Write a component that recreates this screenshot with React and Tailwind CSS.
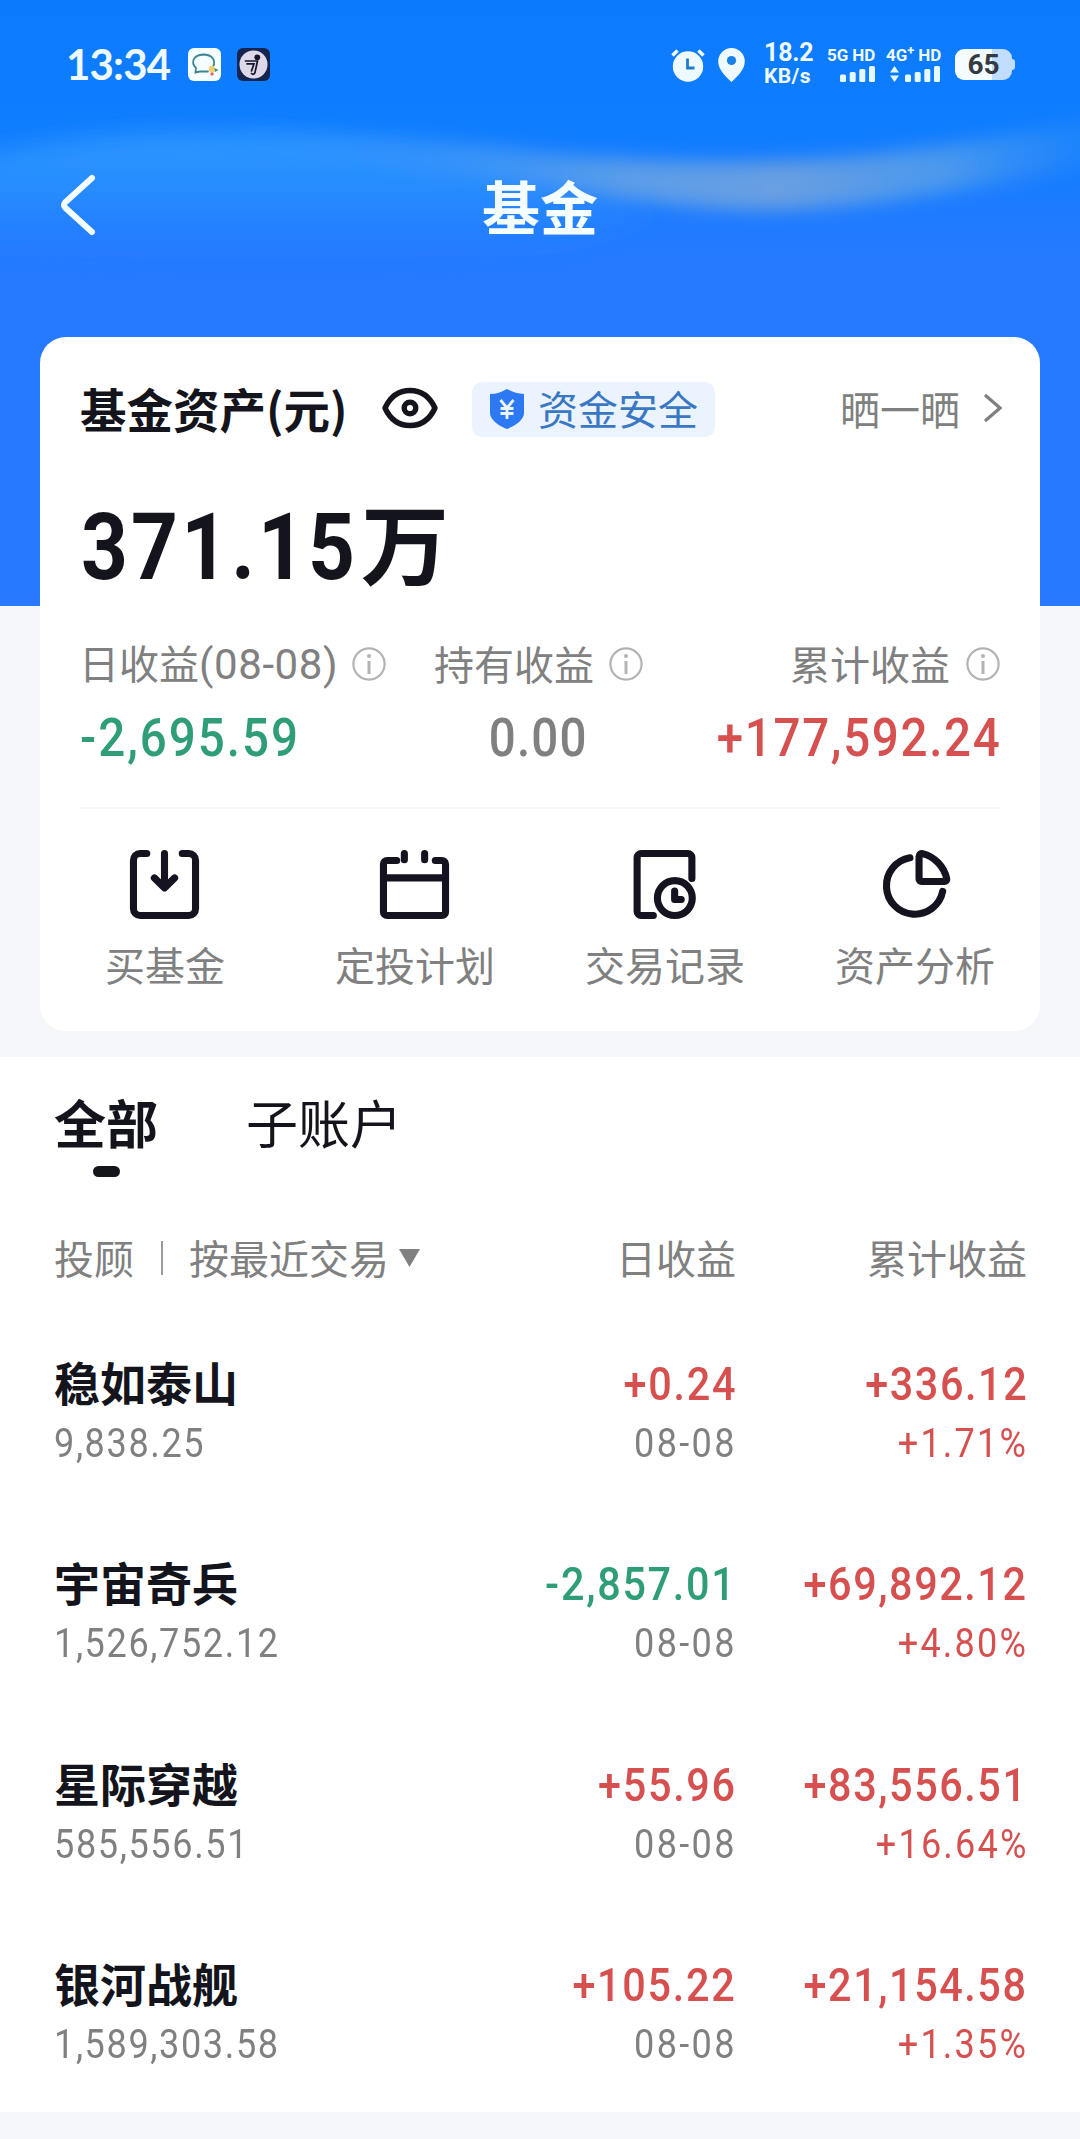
import React from 'react';

const quickActions = [
  { label: '买基金', Icon: BuyIcon },
  { label: '定投计划', Icon: PlanIcon },
  { label: '交易记录', Icon: RecordIcon },
  { label: '资产分析', Icon: AnalysisIcon },
];

const funds = [
  { name: '稳如泰山', amount: '9,838.25', daily: '+0.24', date: '08-08', total: '+336.12', rate: '+1.71%' },
  { name: '宇宙奇兵', amount: '1,526,752.12', daily: '-2,857.01', date: '08-08', total: '+69,892.12', rate: '+4.80%' },
  { name: '星际穿越', amount: '585,556.51', daily: '+55.96', date: '08-08', total: '+83,556.51', rate: '+16.64%' },
  { name: '银河战舰', amount: '1,589,303.58', daily: '+105.22', date: '08-08', total: '+21,154.58', rate: '+1.35%' },
];

function BuyIcon() {
  return (
    <svg className="mr-px h-[71px] w-[71px]" viewBox="0 0 70 70" fill="none" stroke="#14131f" strokeWidth="7" strokeLinecap="round" strokeLinejoin="round">
      <path d="M17.5 4.4H11A6.6 6.6 0 0 0 4.4 11V59A6.6 6.6 0 0 0 11 65.6H59A6.6 6.6 0 0 0 65.6 59V11A6.6 6.6 0 0 0 59 4.4H52.5" />
      <path d="M35 4.4V38M25 28.5L35 38.3L45 28.5" />
    </svg>
  );
}

function PlanIcon() {
  return (
    <svg className="mr-px h-[71px] w-[71px]" viewBox="0 0 70 70" fill="none" stroke="#14131f" strokeWidth="7" strokeLinecap="round" strokeLinejoin="round">
      <path d="M17.500 11.4H8A3.6 3.6 0 0 0 4.4 15V62A3.6 3.6 0 0 0 8 65.6H62A3.6 3.6 0 0 0 65.6 62V15A3.6 3.6 0 0 0 62 11.4H55.500" />
      <path d="M4.4 28.500H65.6M25 4.4V10.500M45 4.4V10.500" />
    </svg>
  );
}

function RecordIcon() {
  return (
    <svg className="mr-px h-[71px] w-[71px]" viewBox="0 0 70 70" fill="none" stroke="#14131f" strokeWidth="7" strokeLinecap="round" strokeLinejoin="round">
      <path d="M24 65.6H12A4 4 0 0 1 8 61.6V8.4A4 4 0 0 1 12 4.4H58A4 4 0 0 1 62 8.4V29" />
      <circle cx="45.2" cy="48.4" r="17.2" />
      <path d="M45 41.5V49.8H51.5" />
    </svg>
  );
}

function AnalysisIcon() {
  return (
    <svg className="h-[71px] w-[71px]" viewBox="0 0 70 70" fill="none" stroke="#14131f" strokeWidth="7" strokeLinecap="round" strokeLinejoin="round">
      <path d="M29.5 8.7A28 28 0 1 0 61.8 41.8" />
      <path d="M38.5 7.2V29.5A2.6 2.6 0 0 0 41 32.1H63.5A2.4 2.4 0 0 0 65.8 29.3A33 33 0 0 0 42 4.6A2.8 2.8 0 0 0 38.5 7.2Z" />
    </svg>
  );
}

function InfoIcon() {
  return (
    <svg className="h-[34px] w-[34px] shrink-0" viewBox="0 0 34 34" fill="none">
      <circle cx="17" cy="17" r="15.6" stroke="#b3b3b3" strokeWidth="2.2" />
      <circle cx="17" cy="8.9" r="2" fill="#b3b3b3" />
      <path d="M17 14V27" stroke="#b3b3b3" strokeWidth="3" />
    </svg>
  );
}

function SignalBars() {
  return (
    <svg className="h-4 w-[35px]" viewBox="0 0 35 16" fill="#e6f8ff">
      <rect x="0" y="8.5" width="6" height="7.5" rx="1.5" />
      <rect x="9.7" y="6" width="6" height="10" rx="1.5" />
      <rect x="19.3" y="3" width="6" height="13" rx="1.5" />
      <rect x="29" y="0" width="6" height="16" rx="1.5" />
    </svg>
  );
}

function HeaderGlow() {
  return (
    <svg className="absolute inset-0 h-full w-full" viewBox="0 0 1080 606" preserveAspectRatio="none">
      <defs>
        <linearGradient id="base" x1="0" y1="0" x2="0" y2="1">
          <stop offset="0" stopColor="#0b7bfd" />
          <stop offset="0.22" stopColor="#0f7dff" />
          <stop offset="0.42" stopColor="#257aff" />
          <stop offset="1" stopColor="#2879ff" />
        </linearGradient>
        <linearGradient id="swoosh" gradientUnits="userSpaceOnUse" x1="200" y1="0" x2="1080" y2="0">
          <stop offset="0" stopColor="#3f9cfb" stopOpacity="0" />
          <stop offset="0.3" stopColor="#4a9ef5" stopOpacity="0.6" />
          <stop offset="0.48" stopColor="#66a3e6" stopOpacity="0.85" />
          <stop offset="0.66" stopColor="#72a2de" stopOpacity="0.9" />
          <stop offset="0.85" stopColor="#569fea" stopOpacity="0.8" />
          <stop offset="1" stopColor="#2f8ff8" stopOpacity="0.4" />
        </linearGradient>
        <linearGradient id="haze" x1="0" y1="0" x2="0" y2="1">
          <stop offset="0" stopColor="#2f99ff" />
          <stop offset="0.5" stopColor="#2b90ff" stopOpacity="0.7" />
          <stop offset="1" stopColor="#267cff" stopOpacity="0" />
        </linearGradient>
        <filter id="soft" x="-20%" y="-40%" width="140%" height="180%">
          <feGaussianBlur stdDeviation="9" />
        </filter>
        <filter id="softer" x="-30%" y="-50%" width="160%" height="200%">
          <feGaussianBlur stdDeviation="12" />
        </filter>
      </defs>
      <rect width="1080" height="606" fill="url(#base)" />
      <path d="M-40 160C60 138 150 130 260 134C400 142 520 180 660 215L560 250C400 270 180 270 -40 250Z" fill="url(#haze)" filter="url(#softer)" />
      <path d="M180 132C330 128 440 138 540 152C660 164 760 165 860 156C950 146 1020 136 1120 112V158C980 188 860 212 745 210C620 204 460 172 180 132Z" fill="url(#swoosh)" filter="url(#soft)" />
    </svg>
  );
}

function StatusBar() {
  return (
    <div className="flex h-[129px] items-center justify-between pl-[66px] pr-[65px] text-[#eefaff]">
      <div className="flex items-center">
        <span className="w-[122px] pb-[2px] font-[Lato] text-[42px] font-bold leading-none tracking-[-0.8px]">13:34</span>
        <svg className="h-[33px] w-[33px]" viewBox="0 0 33 33">
          <rect width="33" height="33" rx="6" fill="#f5fdff" />
          <path d="M8 20C2 14 6 7 15 6.5C25 6.500 28 13 25 18.500M8 20L7.500 24.500L12 23.500H20" fill="none" stroke="#3d8590" strokeWidth="1.8" strokeLinecap="round" />
          <circle cx="24" cy="21" r="3.200" fill="#f2cf78" />
          <path d="M26.500 20L30.500 22L27 24Z" fill="#48906b" />
          <circle cx="24" cy="26" r="1.800" fill="#e2705c" />
        </svg>
        <svg className="ml-4 h-[33px] w-[33px]" viewBox="0 0 33 33">
          <rect width="33" height="33" rx="6" fill="#152550" />
          <circle cx="16.500" cy="16.500" r="14" fill="#ddd9e8" />
          <circle cx="20.300" cy="9.300" r="2.900" fill="#15162a" />
          <path d="M8.500 13H20.500L18 24.500Q16.500 27.500 14.500 25.500M10 15.800H17L14.500 23" fill="none" stroke="#15162a" strokeWidth="1.700" strokeLinecap="round" />
        </svg>
      </div>

      <div className="flex items-center font-[Roboto] font-bold leading-none">
        <svg className="h-[34px] w-[34px]" viewBox="0 0 34 34">
          <circle cx="17" cy="18.500" r="15.200" fill="#eefaff" />
          <path d="M1.500 7.500L6.500 2.500M32.500 7.500L27.500 2.500" stroke="#eefaff" strokeWidth="3.500" />
          <path d="M16.500 10.500V20H23.500" fill="none" stroke="#1f7ccc" strokeWidth="2.800" />
        </svg>
        <svg className="ml-[13px] h-[34px] w-[27px]" viewBox="0 0 27 34">
          <path d="M13.500 0A13.300 13.300 0 0 1 26.800 13.300C26.800 22 19 29 13.500 34C8 29 .2 22 .2 13.300A13.300 13.300 0 0 1 13.500 0Z" fill="#eefaff" />
          <circle cx="13.500" cy="12.500" r="4.600" fill="#1a80e8" />
        </svg>
        <p className="ml-[19px] w-[63px] text-[25px] leading-[22px] tracking-[-0.2px]">
          18.2
          <br />
          <small className="text-[21px] tracking-[0.4px]">KB/s</small>
        </p>
        <div className="flex w-[59px] flex-col">
          <span className="h-[19px] whitespace-nowrap text-[17px] leading-[16px] tracking-[-0.1px]">5G HD</span>
          <div className="pl-[13px]">
            <SignalBars />
          </div>
        </div>
        <div className="flex w-[69px] flex-col">
          <span className="h-[19px] whitespace-nowrap text-[17px] leading-[16px] tracking-[-0.1px]">
            4G<sup className="text-[13px]">+</sup> HD
          </span>
          <div className="flex gap-[6px] pl-1">
            <svg className="h-4 w-[9px]" viewBox="0 0 9 16" fill="#e6f8ff">
              <path d="M4.500 0L9 6.500H0ZM4.500 16L0 9.500H9Z" />
            </svg>
            <SignalBars />
          </div>
        </div>
        <div className="flex items-center">
          <div className="flex h-[31px] w-[57px] items-center justify-center rounded-[9px] bg-linear-to-r from-[#f4fcff] from-65% to-[#c2ddff] to-65% text-[28px] text-[#333a40]">
            65
          </div>
          <div className="h-[11px] w-[3px] rounded-r-full bg-[#c2ddff]" />
        </div>
      </div>
    </div>
  );
}

// Figures are set in a narrowed face with open tracking.
function Figure({ value, align = 'right', className = '' }) {
  const origin = align === 'left' ? 'origin-left' : align === 'center' ? 'origin-center' : 'origin-right -mr-px';
  return (
    <span className={`inline-block scale-x-[0.88] whitespace-nowrap font-[Roboto] leading-none ${origin} ${className}`}>
      {value}
    </span>
  );
}

function Profit({ value, align, className = '' }) {
  const color = value.startsWith('-') ? 'text-[#2f9e78]' : 'text-[#d5504f]';
  return <Figure value={value} align={align} className={`${color} ${className}`} />;
}

function AssetCard() {
  return (
    <section className="relative mx-10 -mt-[269px] h-[694px] rounded-[26px] bg-white">
      <div className="flex h-[144px] items-center pl-10 pr-[38px] text-[40px]">
        <h2 className="w-[302px] whitespace-nowrap pb-[1px] text-[46.500px] font-bold leading-none text-[#14141c]">基金资产(元)</h2>
        <svg className="-mt-[2px] h-[42px] w-[56px]" viewBox="0 0 56 42" fill="none" stroke="#14141c" strokeWidth="5.400">
          <path d="M3 21C9 8 18 3.500 28 3.500S47 8 53 21C47 34 38 38.500 28 38.500S9 34 3 21Z" strokeLinejoin="round" />
          <circle cx="28" cy="21" r="5.800" />
        </svg>
        <div className="ml-[34px] flex h-[55px] w-[243px] items-center rounded-[10px] bg-[#eaf3fe] pl-[18px]">
          <svg className="h-[40px] w-[34px] shrink-0" viewBox="0 0 34 40">
            <path d="M17 0C22 3 28 5 34 5V24C34 31 25 37 17 40C9 37 0 31 0 24V5C6 5 12 3 17 0Z" fill="#2d79f3" />
            <path d="M10.500 11L17 19L23.500 11M17 19V30M10.500 19.500H23.500M10.500 24.500H23.500" fill="none" stroke="#eaf3fe" strokeWidth="2.800" />
          </svg>
          <span className="ml-[14px] whitespace-nowrap pb-[3px] leading-none text-[#3878c4]">资金安全</span>
        </div>
        <span className="ml-auto whitespace-nowrap pb-[2px] leading-none text-[#808080]">晒一晒</span>
        <svg className="-mt-[2px] ml-[23px] h-[30px] w-[19px]" viewBox="0 0 19 30" fill="none" stroke="#808080" strokeWidth="3.200">
          <path d="M2 2L17 15L2 28" />
        </svg>
      </div>

      <div className="flex h-[133px] items-center pl-[41px] text-[#14141c]">
        <span className="w-[280px]">
          <Figure value="371.15" align="left" className="text-[93px] font-bold tracking-[0.038em]" />
        </span>
        <span className="pb-[16px] text-[88px] font-bold leading-none">万</span>
      </div>

      <div className="mx-10 flex h-[195px] justify-between border-b-2 border-[#f7f7f7] pt-[25px] text-[40px] text-[#808080]">
        <div className="w-[306px]">
          <div className="flex h-[50px] items-center justify-between">
            <span className="-ml-px whitespace-nowrap leading-none">
              日收益<span className="font-[Roboto] text-[42px] tracking-[0.6px]">(08-08)</span>
            </span>
            <InfoIcon />
          </div>
          <div className="mt-[19px] flex h-[60px] items-center">
            <Profit value="-2,695.59" align="left" className="text-[54px] font-medium tracking-[0.042em]" />
          </div>
        </div>
        <div className="ml-[48px] w-[209px]">
          <div className="flex h-[50px] items-center justify-between">
            <span className="whitespace-nowrap pb-[3px] leading-none">持有收益</span>
            <InfoIcon />
          </div>
          <div className="mt-[19px] flex h-[60px] items-center justify-center">
            <Figure value="0.00" align="center" className="text-[54px] font-medium tracking-[0.025em]" />
          </div>
        </div>
        <div className="flex flex-1 flex-col items-end">
          <div className="flex h-[50px] items-center gap-4">
            <span className="whitespace-nowrap pb-[3px] leading-none">累计收益</span>
            <InfoIcon />
          </div>
          <div className="mt-[19px] flex h-[60px] items-center">
            <Profit value="+177,592.24" className="text-[54px] font-medium tracking-[0.035em]" />
          </div>
        </div>
      </div>

      <div className="grid grid-cols-4 pt-[40px]">
        {quickActions.map(({ label, Icon }) => (
          <button key={label} type="button" className="flex flex-col items-center">
            <Icon />
            <span className="mt-[24px] text-[40px] leading-none text-[#808080]">{label}</span>
          </button>
        ))}
      </div>
    </section>
  );
}

function FundRow({ fund }) {
  return (
    <div className="flex h-[200.600px] items-start">
      <div className="flex-1">
        <div className="flex h-[60px] items-center pb-[5px] text-[46px] font-bold leading-none text-[#14141c]">{fund.name}</div>
        <div className="flex h-[60px] items-center">
          <Figure value={fund.amount} align="left" className="text-[41px] tracking-[0.045em] text-[#808080]" />
        </div>
      </div>
      <div className="flex w-[240px] flex-col items-end">
        <div className="flex h-[60px] items-center">
          <Profit value={fund.daily} className="text-[47px] font-medium tracking-[0.042em]" />
        </div>
        <div className="flex h-[60px] items-center">
          <Figure value={fund.date} className="text-[41px] tracking-[0.065em] text-[#808080]" />
        </div>
      </div>
      <div className="flex w-[291px] flex-col items-end">
        <div className="flex h-[60px] items-center">
          <Profit value={fund.total} className="text-[47px] font-medium tracking-[0.038em]" />
        </div>
        <div className="flex h-[60px] items-center">
          <Profit value={fund.rate} className="text-[41px] tracking-[0.06em]" />
        </div>
      </div>
    </div>
  );
}

function FundList() {
  return (
    <section className="mt-[26px] h-[1055px] bg-white pl-[54px] pr-[53px]">
      <div className="flex pt-[35px] text-[52px] leading-none text-[#14141c]">
        <div className="flex flex-col items-center">
          <span className="font-bold leading-[60px]">全部</span>
          <span className="mt-[14px] h-[11px] w-[27px] rounded-full bg-[#14161a]" />
        </div>
        <span className="ml-[88px] leading-[60px]">子账户</span>
      </div>

      <div className="mt-[52px] flex h-[60px] items-center text-[40px] leading-none text-[#808080]">
        <span className="pb-[5px]">投顾</span>
        <span className="-mt-[3px] ml-[27px] h-[34px] w-[2px] bg-[#9a9a9a]" />
        <span className="ml-[26px] pb-[5px]">按最近交易</span>
        <svg className="-mt-[2px] ml-[10px] h-[18px] w-[21px]" viewBox="0 0 21 18" fill="#808080">
          <path d="M0 0H21L10.500 18Z" />
        </svg>
        <span className="ml-auto pb-[5px]">日收益</span>
        <span className="w-[291px] pb-[5px] text-right">累计收益</span>
      </div>

      <div className="mt-[64px]">
        {funds.map((fund) => (
          <FundRow key={fund.name} fund={fund} />
        ))}
      </div>
    </section>
  );
}

export default function App() {
  return (
    <main className="h-[2139px] w-[1080px] overflow-hidden bg-[#f6f7fa] font-['Noto_Sans_CJK_SC',sans-serif]">
      <header className="relative h-[606px]">
        <HeaderGlow />
        <div className="relative">
          <StatusBar />
          <div className="grid h-[152px] grid-cols-3 items-center px-[59px]">
            <svg className="h-[62px] w-[38px]" viewBox="0 0 38 62" fill="none" stroke="#f4fdff" strokeWidth="6" strokeLinecap="round" strokeLinejoin="round">
              <path d="M33 4L6 28.500Q4 31 6 33.500L33 58" />
            </svg>
            <h1 className="text-center text-[58px] font-bold leading-none text-[#f4fdff]">基金</h1>
          </div>
        </div>
      </header>
      <AssetCard />
      <FundList />
    </main>
  );
}
